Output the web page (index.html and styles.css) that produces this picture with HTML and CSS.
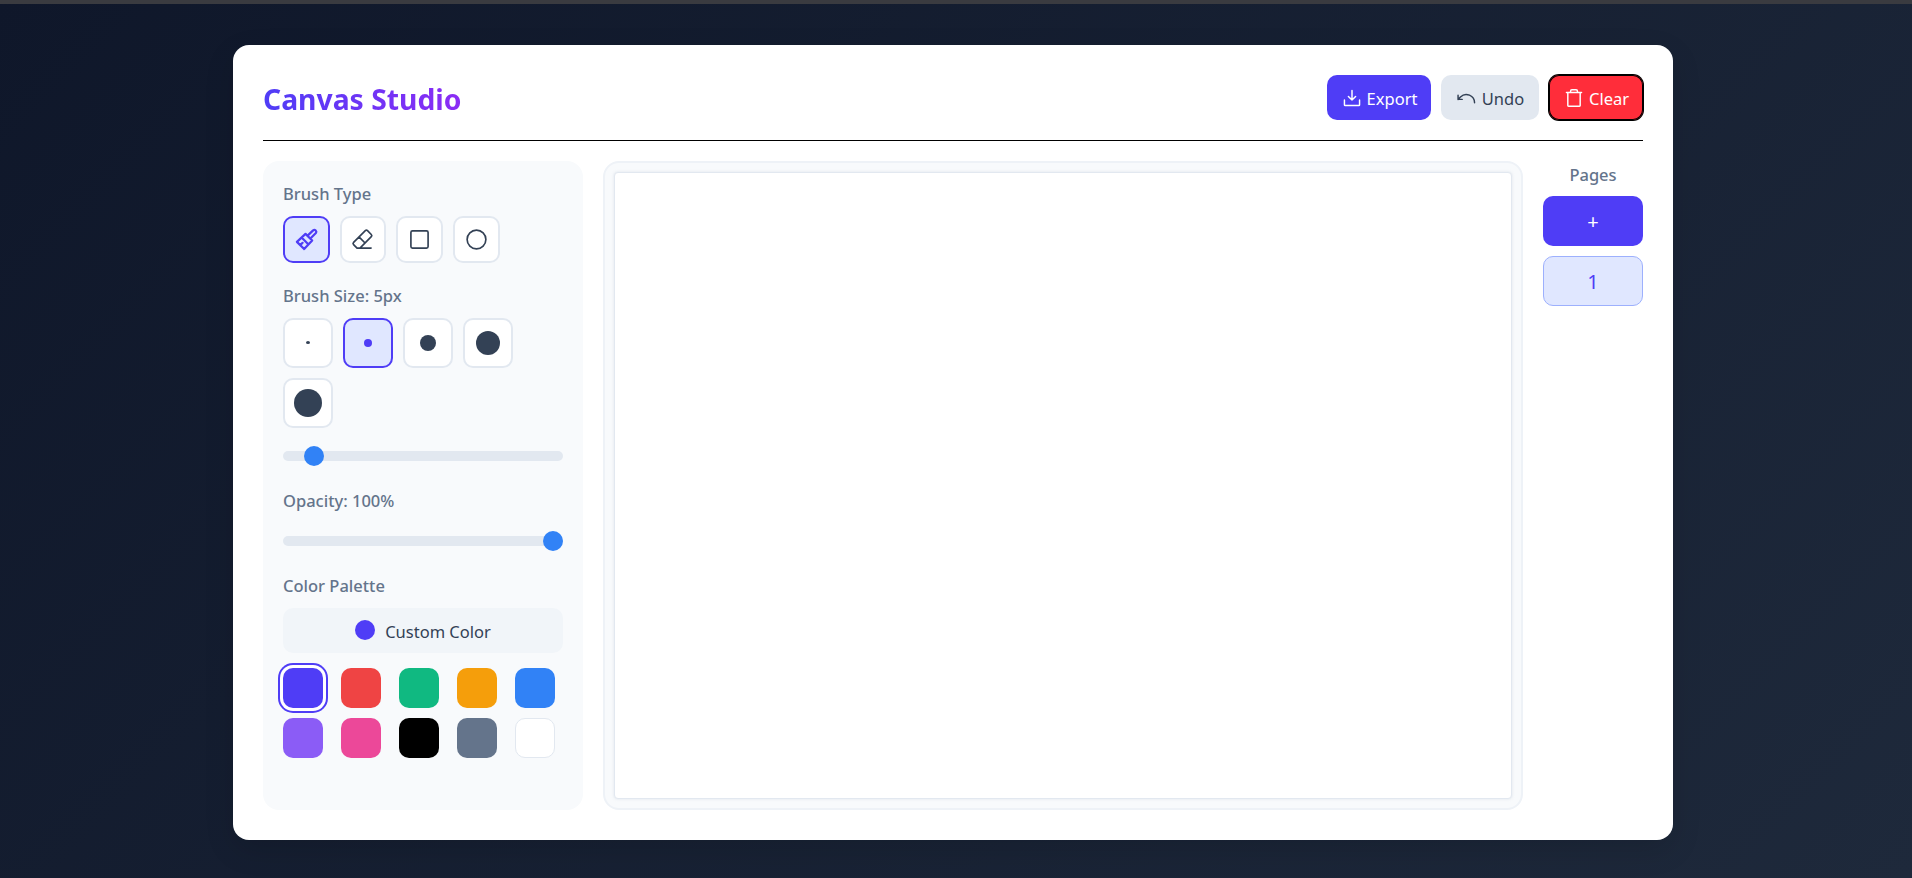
FILE: index.html
```html
<!DOCTYPE html>
<html lang="en">
<head>
<meta charset="utf-8">
<title>Canvas Studio</title>
<link rel="stylesheet" href="styles.css">
</head>
<body>
<div class="strip"></div>
<main class="stage">
  <section class="card">
    <header class="header">
      <h1 class="title">Canvas Studio</h1>
      <div class="actions">
        <button class="btn btn-primary"><svg class="icon" viewBox="0 0 256 256"><path d="M128 40V152M86 110l42 42 42-42M216 152v56a8 8 0 0 1-8 8H48a8 8 0 0 1-8-8V152"/></svg><span class="btn-text">Export</span></button>
        <button class="btn btn-muted"><svg class="icon" viewBox="0 0 256 256"><path d="M72 144H24V96M216 184A96 96 0 0 0 52 116L24 144"/></svg><span class="btn-text">Undo</span></button>
        <button class="btn btn-danger"><svg class="icon" viewBox="0 -8 256 256"><path d="M216 56H40M200 56V208a8 8 0 0 1-8 8H64a8 8 0 0 1-8-8V56M168 56V40a16 16 0 0 0-16-16H104A16 16 0 0 0 88 40V56"/></svg><span class="btn-text">Clear</span></button>
      </div>
    </header>
    <div class="workspace">
      <aside class="panel">
        <div class="group">
          <div class="label">Brush Type</div>
          <div class="row">
            <button class="tool active"><svg class="icon-lg icon-brush" viewBox="0 0 256 256"><path d="M150 78L196 34a20 20 0 0 1 28 28L178 108M118 70L186 138L104 226L30 152ZM78 108L146 176M64 186L88 162"/></svg></button>
            <button class="tool"><svg class="icon-lg" viewBox="0 0 256 256"><path d="M216 216H72L36.700 180.700a16 16 0 0 1 0-22.600L156.700 38a16 16 0 0 1 22.600 0L218 76.700a16 16 0 0 1 0 22.600L102 216M92 102l62 62"/></svg></button>
            <button class="tool"><svg class="icon-lg" viewBox="0 0 256 256"><rect x="40" y="40" width="176" height="176" rx="16"/></svg></button>
            <button class="tool"><svg class="icon-lg" viewBox="0 0 256 256"><circle cx="128" cy="128" r="96"/></svg></button>
          </div>
        </div>
        <div class="group">
          <div class="label">Brush Size: 5px</div>
          <div class="sizes">
            <button class="size"><span class="dot dot-1"></span></button>
            <button class="size active"><span class="dot dot-2"></span></button>
            <button class="size"><span class="dot dot-3"></span></button>
            <button class="size"><span class="dot dot-4"></span></button>
            <button class="size"><span class="dot dot-5"></span></button>
          </div>
          <input class="slider" type="range" min="1" max="50" value="5">
        </div>
        <div class="group">
          <div class="label">Opacity: 100%</div>
          <input class="slider" type="range" min="0" max="100" value="100">
        </div>
        <div class="group">
          <div class="label">Color Palette</div>
          <button class="custom"><span class="custom-dot"></span><span class="btn-text">Custom Color</span></button>
          <div class="swatches">
            <span class="swatch selected c-indigo"></span>
            <span class="swatch c-red"></span>
            <span class="swatch c-green"></span>
            <span class="swatch c-amber"></span>
            <span class="swatch c-blue"></span>
            <span class="swatch c-violet"></span>
            <span class="swatch c-pink"></span>
            <span class="swatch c-black"></span>
            <span class="swatch c-slate"></span>
            <span class="swatch c-white"></span>
          </div>
        </div>
      </aside>
      <div class="canvas-wrap"><div class="canvas"></div></div>
      <aside class="pages">
        <div class="pages-label">Pages</div>
        <button class="page page-add">+</button>
        <button class="page page-current">1</button>
      </aside>
    </div>
  </section>
</main>
</body>
</html>
```
FILE: styles.css
```css
* { box-sizing: border-box; }
html, body { height: 100%; }
body {
  margin: 0;
  display: flex;
  flex-direction: column;
  overflow: hidden;
  background: linear-gradient(135deg, #0f172a, #1e293b);
  font-family: "Noto Sans", "Open Sans", sans-serif;
  color: #334155;
}
.strip { height: 4px; flex: none; background: #3a3b40; }
.stage {
  flex: 1;
  min-height: 0;
  display: flex;
  justify-content: center;
  padding: 41px 6px 38px 0;
}
.card {
  width: 1440px;
  display: flex;
  flex-direction: column;
  padding: 30px;
  background: #fff;
  border-radius: 16px;
  box-shadow: 0 10px 30px rgba(0, 0, 0, .12);
}
.header {
  flex: none;
  display: flex;
  align-items: center;
  justify-content: space-between;
  height: 66px;
  padding-bottom: 20px;
  border-bottom: 1px solid #000;
  margin-bottom: 20px;
}
.title {
  margin: 2px 0 0;
  font-size: 28.3px;
  line-height: 38px;
  font-weight: 700;
  background: linear-gradient(90deg, #4f3df6, #8b2cf5);
  -webkit-background-clip: text;
  background-clip: text;
  color: transparent;
}
.actions { display: flex; gap: 10px; }
button { font-family: inherit; cursor: pointer; }
.btn {
  display: flex;
  align-items: center;
  justify-content: center;
  gap: 4px;
  height: 45px;
  padding: 0 12px;
  border: 0;
  border-radius: 10px;
  font-size: 16.5px;
}
.btn-text { display: block; padding-top: 2px; }
.icon { width: 22px; height: 22px; }
.icon, .icon-lg { fill: none; stroke: currentColor; stroke-width: 17; stroke-linecap: round; stroke-linejoin: round; }
.icon-brush { stroke-width: 23; }
.btn-primary { width: 104px; background: #4f3df6; color: #fff; }
.btn-muted { width: 98px; background: #e2e8f0; color: #334155; }
.btn-danger { width: 94px; background: #ff2d3a; color: #fff; box-shadow: 0 0 0 1px #000, inset 0 0 0 1px #000; }
.workspace { flex: 1; min-height: 0; display: flex; gap: 20px; }
.panel {
  flex: none;
  width: 320px;
  padding: 20px;
  background: #f8fafc;
  border-radius: 16px;
}
.group { display: flex; flex-direction: column; margin-bottom: 20px; }
.label {
  font-size: 16.5px;
  line-height: 26px;
  margin-bottom: 9px;
  font-weight: 500;
  color: #64748b;
}
.row { display: flex; gap: 10px; }
.tool {
  width: 46.67px;
  height: 46.67px;
  display: flex;
  align-items: center;
  justify-content: center;
  padding: 0;
  background: #fff;
  border: 2px solid #e2e8f0;
  border-radius: 10px;
  color: #334155;
}
.icon-lg { width: 25px; height: 25px; flex: none; }
.tool.active, .size.active { background: #e0e7ff; border-color: #4f3df6; color: #4f3df6; }
.sizes { display: flex; flex-wrap: wrap; gap: 10px; margin-bottom: 10px; }
.size {
  width: 50px;
  height: 50px;
  display: flex;
  align-items: center;
  justify-content: center;
  padding: 0;
  background: #fff;
  border: 2px solid #e2e8f0;
  border-radius: 10px;
}
.dot { display: block; border-radius: 50%; background: #334155; }
.size.active .dot { background: #4f3df6; }
.dot-1 { width: 4px; height: 3px; }
.dot-2 { width: 8px; height: 8px; }
.dot-3 { width: 16px; height: 16px; }
.dot-4 { width: 24px; height: 24px; }
.dot-5 { width: 28px; height: 28px; }
.slider {
  display: block;
  width: 100%;
  height: 10px;
  margin: 13.33px 0 6.67px;
  appearance: none;
  -webkit-appearance: none;
  background: #e2e8f0;
  border-radius: 5px;
  outline: 0;
}
.slider::-webkit-slider-thumb {
  -webkit-appearance: none;
  width: 20px;
  height: 20px;
  border-radius: 50%;
  background: #3182f6;
}
.custom {
  width: 100%;
  height: 45.67px;
  display: flex;
  align-items: center;
  justify-content: center;
  gap: 10px;
  border: 0;
  border-radius: 10px;
  background: #f1f5f9;
  color: #334155;
  font-size: 16.5px;
}
.custom-dot { width: 20px; height: 20px; border-radius: 50%; background: #4f3df6; }
.swatches {
  display: grid;
  grid-template-columns: repeat(5, 1fr);
  gap: 10px;
  margin-top: 14.67px;
}
.swatch { display: block; width: 40px; height: 40px; border-radius: 10px; }
.selected { box-shadow: 0 0 0 3px #fff, 0 0 0 5px #4f3df6; }
.c-indigo { background: #4f3df6; }
.c-red { background: #ef4444; }
.c-green { background: #10b981; }
.c-amber { background: #f59e0b; }
.c-blue { background: #3182f6; }
.c-violet { background: #8b5cf6; }
.c-pink { background: #ec4899; }
.c-black { background: #000; }
.c-slate { background: #64748b; }
.c-white { background: #fff; border: 1px solid #e2e8f0; }
.canvas-wrap {
  flex: 1;
  min-width: 0;
  padding: 9px;
  background: #f8fafc;
  border: 2px solid #eef2f7;
  border-radius: 16px;
}
.canvas { height: 100%; background: #fff; border: 1px solid #e2e8f0; border-radius: 4px; box-shadow: 0 0 3px rgba(148, 163, 184, .25); }
.pages { flex: none; width: 100px; display: flex; flex-direction: column; gap: 10px; }
.pages-label { height: 25px; padding-top: 1px; line-height: 25px; text-align: center; font-size: 16.5px; font-weight: 500; color: #64748b; }
.page { height: 50px; border-radius: 10px; font-size: 20px; }
.page-add { border: 0; background: #4f3df6; color: #fff; }
.page-current { background: #e0e7ff; border: 1px solid #9db0fd; color: #4f3df6; }
```
